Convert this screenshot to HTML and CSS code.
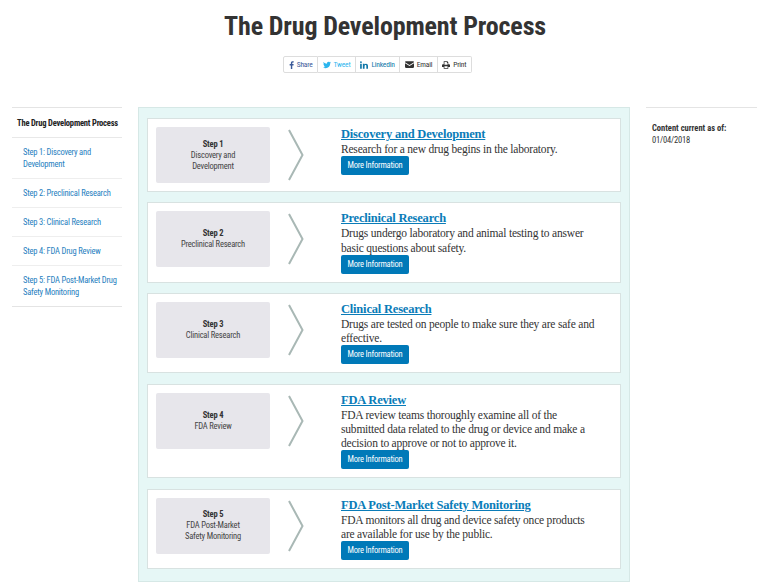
FILE: index.html
```html
<!DOCTYPE html>
<html lang="en">
<head>
<meta charset="utf-8">
<title>The Drug Development Process</title>
<link rel="stylesheet" href="styles.css">
</head>
<body>
<h1 class="title">The Drug Development Process</h1>
<div class="share">
  <a class="share-btn c-fb"><svg class="ico" viewBox="0 0 10 16"><path d="M6.500 16V9h2.400l.4-2.800H6.500V4.500c0-.8.3-1.300 1.400-1.300h1.500V.7C9.100.6 8.300.5 7.300.5 5.200.5 3.700 1.800 3.700 4.200v2H1.300V9h2.400v7z"/></svg>Share</a>
  <a class="share-btn c-tw"><svg class="ico ico-w" viewBox="0 0 16 13"><path d="M16 1.500c-.6.300-1.200.4-1.900.5.700-.4 1.200-1 1.400-1.800-.6.400-1.300.7-2.100.8C12.800.3 12 0 11.100 0 9.300 0 7.800 1.500 7.800 3.300c0 .3 0 .5.100.8C5.200 4 2.800 2.700 1.100.6.800 1.100.7 1.600.7 2.200c0 1.100.6 2.100 1.500 2.700-.5 0-1-.2-1.500-.4 0 1.600 1.100 2.900 2.600 3.200-.5.100-1 .2-1.500.1.400 1.300 1.600 2.200 3.100 2.300C3.500 11.200 1.800 11.800 0 11.600 1.500 12.500 3.200 13 5 13c6 0 9.400-5 9.400-9.400v-.4c.6-.5 1.200-1 1.600-1.700z"/></svg>Tweet</a>
  <a class="share-btn c-li"><svg class="ico ico-w" viewBox="0 0 14 13"><path d="M.2 4.300h2.900V13H.2zM1.600 0c1 0 1.700.7 1.700 1.500S2.600 3 1.600 3 0 2.300 0 1.500.7 0 1.600 0zM5 4.300h2.800v1.200c.4-.7 1.300-1.400 2.700-1.400 2.900 0 3.500 1.800 3.500 4.300V13h-2.900V8.800c0-1.100 0-2.300-1.400-2.300s-1.700 1.100-1.700 2.200V13H5z"/></svg>LinkedIn</a>
  <a class="share-btn c-dk"><svg class="ico ico-m" viewBox="0 0 16 12"><path d="M1.500 0h13C15.300 0 16 .7 16 1.500v.4L8 7 0 1.900v-.4C0 .7.700 0 1.500 0zM0 3.700l8 5 8-5v6.800c0 .8-.7 1.500-1.500 1.500h-13C.7 12 0 11.300 0 10.500z"/></svg>Email</a>
  <a class="share-btn c-dk"><svg class="ico ico-w" viewBox="0 0 14 13"><path d="M3 0h6.500L11 1.500V5h1.500c.8 0 1.500.7 1.500 1.500V10h-3v3H3v-3H0V6.500C0 5.700.7 5 1.500 5H3zm1.300 1.300V6h5.400V2.800H8.500V1.300zm0 7.500v3h5.400v-3z"/></svg>Print</a>
</div>

<div class="layout">
  <nav class="sidenav">
    <div class="nav-head">The Drug Development Process</div>
    <a class="nav-item">Step 1: Discovery and Development</a>
    <a class="nav-item">Step 2: Preclinical Research</a>
    <a class="nav-item">Step 3: Clinical Research</a>
    <a class="nav-item">Step 4: FDA Drug Review</a>
    <a class="nav-item">Step 5: FDA Post-Market Drug Safety Monitoring</a>
  </nav>

  <main class="steps">
    <section class="card">
      <div class="box"><strong>Step 1</strong><span>Discovery and<br>Development</span></div>
      <svg class="arrow" viewBox="0 0 16 52"><path d="M1 1l13.500 25L1 51" /></svg>
      <div class="body">
        <a class="card-title">Discovery and Development</a>
        <p>Research for a new drug begins in the laboratory.</p>
        <a class="more">More Information</a>
      </div>
    </section>
    <section class="card">
      <div class="box"><strong>Step 2</strong><span>Preclinical Research</span></div>
      <svg class="arrow" viewBox="0 0 16 52"><path d="M1 1l13.500 25L1 51" /></svg>
      <div class="body">
        <a class="card-title">Preclinical Research</a>
        <p>Drugs undergo laboratory and animal testing to answer basic questions about safety.</p>
        <a class="more">More Information</a>
      </div>
    </section>
    <section class="card">
      <div class="box"><strong>Step 3</strong><span>Clinical Research</span></div>
      <svg class="arrow" viewBox="0 0 16 52"><path d="M1 1l13.500 25L1 51" /></svg>
      <div class="body">
        <a class="card-title">Clinical Research</a>
        <p>Drugs are tested on people to make sure they are safe and effective.</p>
        <a class="more">More Information</a>
      </div>
    </section>
    <section class="card">
      <div class="box"><strong>Step 4</strong><span>FDA Review</span></div>
      <svg class="arrow" viewBox="0 0 16 52"><path d="M1 1l13.500 25L1 51" /></svg>
      <div class="body">
        <a class="card-title">FDA Review</a>
        <p>FDA review teams thoroughly examine all of the submitted data related to the drug or device and make a decision to approve or not to approve it.</p>
        <a class="more">More Information</a>
      </div>
    </section>
    <section class="card">
      <div class="box"><strong>Step 5</strong><span>FDA Post-Market<br>Safety Monitoring</span></div>
      <svg class="arrow" viewBox="0 0 16 52"><path d="M1 1l13.500 25L1 51" /></svg>
      <div class="body">
        <a class="card-title">FDA Post-Market Safety Monitoring</a>
        <p>FDA monitors all drug and device safety once products are available for use by the public.</p>
        <a class="more">More Information</a>
      </div>
    </section>
  </main>

  <aside class="aside">
    <strong>Content current as of:</strong>
    <span>01/04/2018</span>
  </aside>
</div>
</body>
</html>
```

FILE: styles.css
```css
* { box-sizing: border-box; }
html, body { margin: 0; padding: 0; }
body {
  width: 770px;
  height: 583px;
  overflow: hidden;
  background: #fff;
  color: #333;
  font-family: Roboto, sans-serif;
  font-stretch: condensed;
}
a { color: inherit; }

.title {
  margin: 0;
  padding-top: 11px;
  height: 56px;
  text-align: center;
  font: 700 26px/31px Roboto, sans-serif;
  font-stretch: condensed;
  letter-spacing: -0.15px;
  color: #333;
}

.share {
  display: flex;
  justify-content: center;
  height: 17px;
  padding-right: 15px;
}
.share-btn {
  display: flex;
  align-items: center;
  height: 17px;
  padding: 0 4.500px;
  border: 1px solid #ddd;
  border-left-width: 0;
  font-size: 7.500px;
  letter-spacing: -0.2px;
  white-space: nowrap;
}
.share-btn:first-child { border-left-width: 1px; border-radius: 2px 0 0 2px; }
.share-btn:last-child { border-radius: 0 2px 2px 0; }
.ico { height: 8px; width: 5px; margin-right: 3px; fill: currentColor; flex: none; }
.ico-w { width: 8px; }
.ico-m { width: 9px; height: 7px; }
.c-fb { color: #3b5998; }
.c-tw { color: #2bb5ee; }
.c-li { color: #0e76a8; }
.c-dk { color: #333; }

.layout {
  display: flex;
  align-items: flex-start;
  margin-top: 34px;
  padding-left: 12px;
}

.sidenav {
  width: 110px;
  flex: none;
  border-top: 1px solid #e4e4e4;
  font-size: 8.500px;
  letter-spacing: -0.2px;
  line-height: 12px;
}
.nav-head {
  height: 30px;
  padding: 9px 0 0 5px;
  font-weight: 700;
  color: #222;
  white-space: nowrap;
  border-bottom: 1px solid #e8e8e8;
}
.nav-item {
  display: block;
  padding: 8px 5px 8px 11px;
  color: #1f80c0;
  border-bottom: 1px solid #eee;
}
.nav-item:last-child { border-bottom-color: #e4e4e4; }

.steps {
  width: 492px;
  height: 475px;
  flex: none;
  margin-left: 16px;
  padding: 10px 8px;
  display: flex;
  flex-direction: column;
  gap: 10.300px;
  background: #e6f7f6;
  border: 1px solid #d6e8e6;
}
.card {
  display: flex;
  align-items: flex-start;
  padding: 8px;
  background: #fff;
  border: 1px solid #d8e2e1;
}
.box {
  width: 114px;
  height: 56px;
  flex: none;
  display: flex;
  flex-direction: column;
  align-items: center;
  justify-content: center;
  background: #e7e6eb;
  border-radius: 2px;
  font-size: 8.500px;
  letter-spacing: -0.2px;
  line-height: 11px;
  text-align: center;
  color: #444;
}
.box strong { color: #333; }
.arrow {
  width: 16px;
  height: 52px;
  flex: none;
  margin: 2px 37px 0 18px;
  fill: none;
  stroke: #a9b8b5;
  stroke-width: 2px;
}
.body { flex: 1; min-width: 0; }
.card-title {
  display: block;
  font: 700 12.500px/15px "Liberation Serif", serif;
  letter-spacing: -0.2px;
  color: #0a7cb8;
  text-decoration: underline;
}
.body p {
  margin: 0;
  font: 400 11.500px/14.200px "Liberation Serif", serif;
  letter-spacing: -0.2px;
  color: #333;
  width: 257px;
}
.more {
  display: block;
  width: 68px;
  height: 19px;
  background: #0079b8;
  border-radius: 2px;
  color: #fff;
  font-size: 8.500px;
  letter-spacing: -0.2px;
  line-height: 19px;
  text-align: center;
  white-space: nowrap;
}

.aside {
  width: 111px;
  flex: none;
  margin-left: 16px;
  padding: 14px 6px 0;
  border-top: 1px solid #e4e4e4;
  font-size: 8.500px;
  letter-spacing: -0.2px;
  line-height: 12px;
  color: #333;
}
.aside strong, .aside span { display: block; }
.aside strong { letter-spacing: 0; }
```
